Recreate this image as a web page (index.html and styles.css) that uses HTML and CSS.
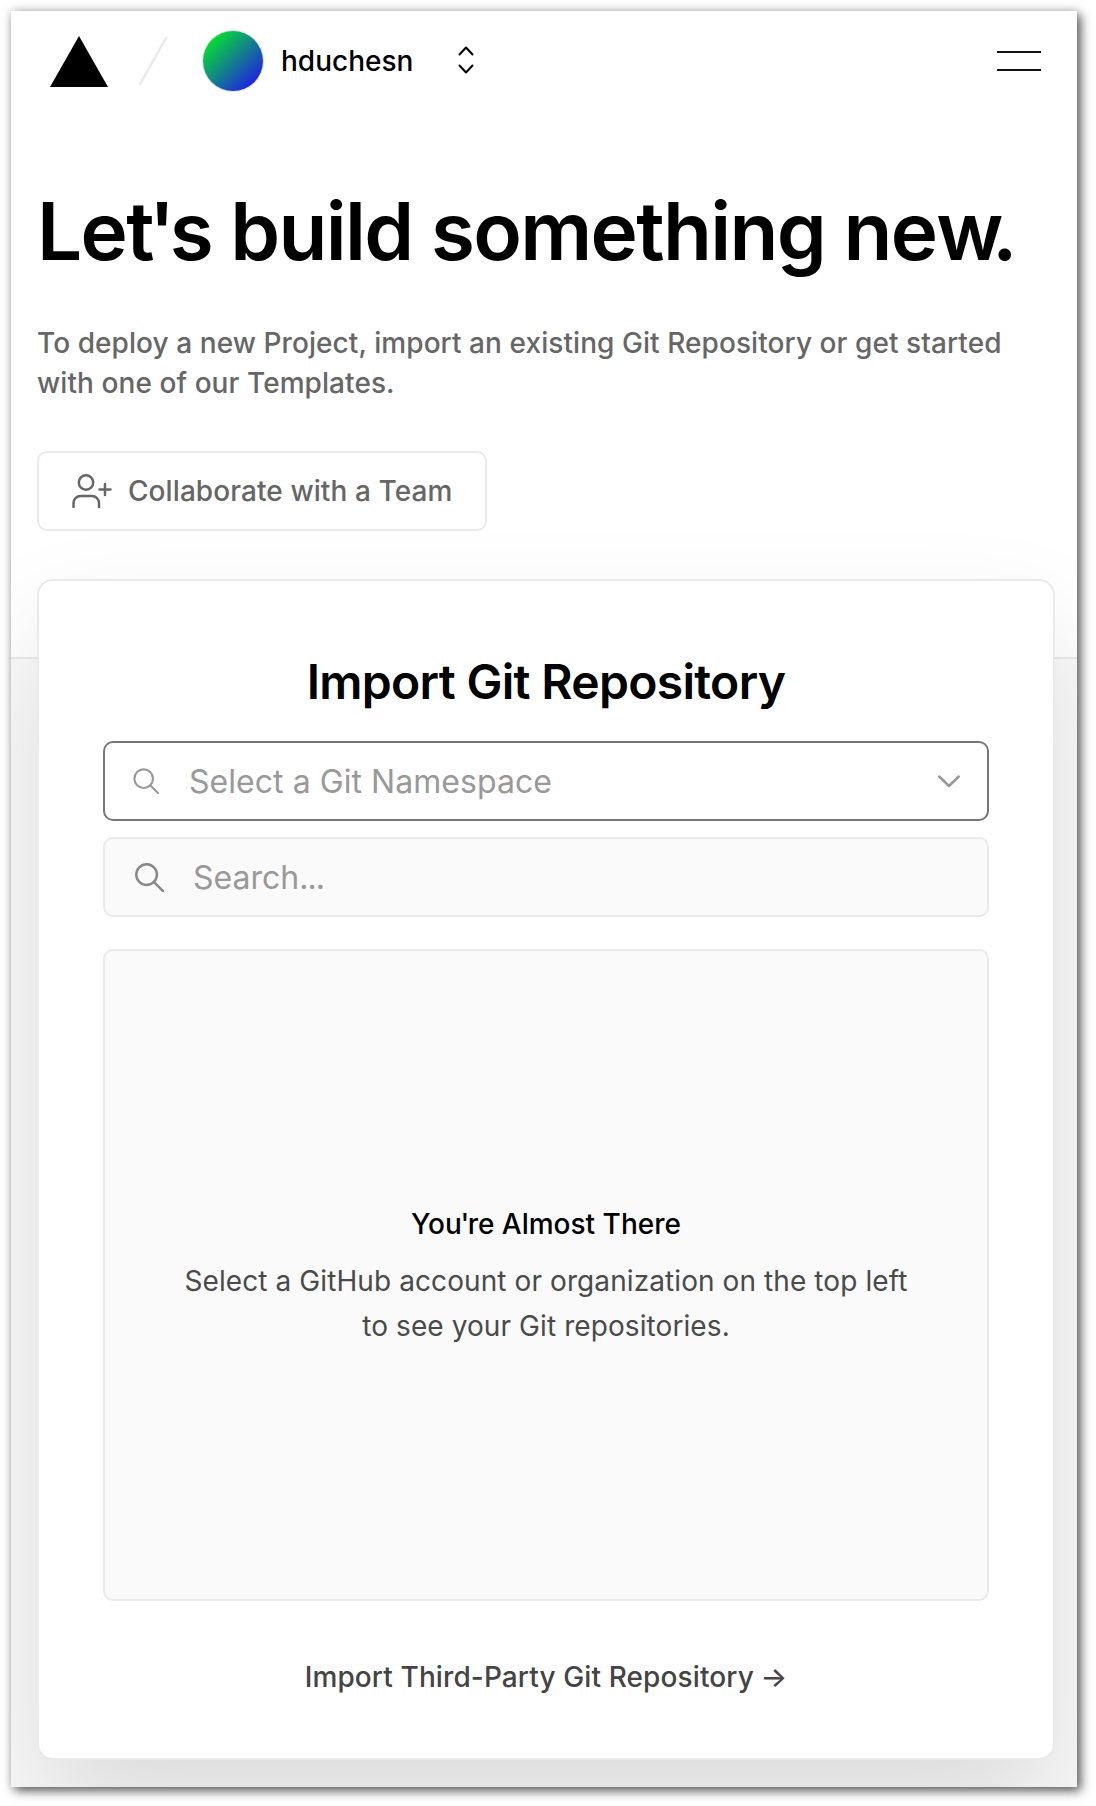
FILE: index.html
```html
<!DOCTYPE html>
<html lang="en">
<head>
<meta charset="utf-8">
<title>New Project</title>
<link rel="stylesheet" href="styles.css">
</head>
<body>
<div class="window">
  <section class="hero">
    <header class="topbar">
      <svg class="logo" viewBox="0 0 58 51" width="58" height="51"><path d="M29 0L58 51H0Z"/></svg>
      <svg class="slash" viewBox="0 0 30 50" width="30" height="50"><path d="M28 2L2 48"/></svg>
      <span class="avatar"></span>
      <span class="name">hduchesn</span>
      <svg class="switcher" viewBox="0 0 16 28" width="16" height="28"><path d="M1.5 8.5L8 1.5L14.5 8.5M1.5 19.5L8 26.5L14.5 19.5"/></svg>
      <button class="menu" aria-label="Menu"><span></span><span></span></button>
    </header>
    <div class="intro">
      <h1>Le<span class="kern">t'</span>s build something ne<span class="kern-dot">w</span>.</h1>
      <p class="lead">To deploy a new Project, import an existing Git Repository or get started with one of our Templates.</p>
      <button class="collaborate">
        <svg viewBox="0 0 40 34" width="40" height="34"><circle cx="14" cy="8.5" r="7.2"/><path d="M1.5 33V29a7 7 0 0 1 7-7H20a7 7 0 0 1 7 7V33M27.5 15.5H38.5M33 10V21"/></svg>
        <span>Collaborate with a Team</span>
      </button>
    </div>
  </section>
  <main class="content">
    <section class="card">
      <h2>Import Git Repository</h2>
      <div class="field select">
        <svg class="find small" viewBox="0 0 28 28" width="26" height="26"><circle cx="11.5" cy="11.5" r="10"/><path d="M19 19L27 27"/></svg>
        <span class="placeholder">Select a Git Namespace</span>
        <svg class="caret" viewBox="0 0 22 13" width="22" height="13"><path d="M1.3 1.5L11 11L20.7 1.5"/></svg>
      </div>
      <div class="field search">
        <svg class="find" viewBox="0 0 30 30" width="29" height="29"><circle cx="12" cy="12" r="10.7"/><path d="M20 20L29 29"/></svg>
        <span class="placeholder">Search<span class="dots">...</span></span>
      </div>
      <div class="empty">
        <h3>Yo<span class="kern">u'</span>re Almost There</h3>
        <p>Select a GitHub account or organization on the top left to see your Git repositories.</p>
      </div>
      <a class="third-party">Import Third-Party Git Repository <span class="arrow">→</span></a>
    </section>
  </main>
</div>
</body>
</html>
```
FILE: styles.css
```css
* { box-sizing: border-box; }
body {
  margin: 0;
  padding: 11px 19px 19px 11px;
  background: #fff;
  font-family: Inter, "Liberation Sans", sans-serif;
  font-size: 28px;
}
h1, h2, h3, p { margin: 0; }
button { font: inherit; background: none; border: 0; padding: 0; }
svg { fill: none; flex: none; stroke-width: 2.5; stroke-linecap: round; stroke-linejoin: round; }

.window {
  width: 1066px;
  height: 1776px;
  background: #fff;
  box-shadow: 4px 4px 10px rgba(0, 0, 0, .6), 0 0 10px rgba(0, 0, 0, .18);
  display: flex;
  flex-direction: column;
}
.hero { height: 648px; border-bottom: 2px solid #eaeaea; }

.topbar { height: 100px; padding: 0 36px 0 39px; display: flex; align-items: center; }
.logo { fill: #000; }
.slash { margin-left: 30px; stroke: #eaeaea; }
.avatar {
  width: 60px;
  height: 60px;
  margin-left: 35px;
  border-radius: 50%;
  background: linear-gradient(135deg, #00f31c 5%, #118f80 45%, #1f15f0 92%);
  box-shadow: 0 0 0 1px rgba(0, 0, 0, .12);
}
.name { margin-left: 18px; font-weight: 500; color: #000; }
.switcher { margin: 0 0 2px 45px; stroke: #000; stroke-width: 2; }
.menu { margin-left: auto; width: 44px; height: 20px; display: flex; flex-direction: column; justify-content: space-between; }
.menu span { width: 44px; height: 2px; background: #111; }

.intro { padding: 72px 26px 0; }
h1 { font-size: 80px; line-height: 96px; font-weight: 600; letter-spacing: -1.7px; white-space: nowrap; }
h1 .kern { letter-spacing: -5.4px; }
h1 .kern-dot { letter-spacing: -11.5px; }
.lead { margin-top: 44px; line-height: 40px; font-weight: 500; color: #666; letter-spacing: .07px; }
.collaborate {
  width: 450px;
  height: 80px;
  margin-top: 48px;
  padding-left: 33px;
  border: 2px solid #eaeaea;
  border-radius: 10px;
  background: #fff;
  display: flex;
  align-items: center;
  gap: 16px;
  font-weight: 500;
  letter-spacing: .08px;
  color: #666;
}
.collaborate svg { stroke: #666; }

.content { flex: 1; background: #fafafa; padding: 0 22px 0 26px; clip-path: inset(-300px 0 0 0); }
.card {
  height: 1181px;
  margin-top: -80px;
  padding: 71px 64px 0;
  border: 2px solid #eaeaea;
  border-radius: 16px;
  background: #fff;
  box-shadow: 0 60px 120px rgba(0, 0, 0, .12);
  display: flex;
  flex-direction: column;
  position: relative;
}
h2 { font-size: 48px; line-height: 60px; font-weight: 600; letter-spacing: -.69px; text-align: center; }
.field {
  height: 80px;
  border: 2px solid #eaeaea;
  border-radius: 10px;
  display: flex;
  align-items: center;
  font-size: 32px;
  color: #999;
}
.select { margin-top: 29px; padding: 0 27px 0 28px; border-color: #777; letter-spacing: .05px; }
.search { margin-top: 16px; padding: 0 30px; background: #fafafa; }
.find { stroke: #888; }
.find.small { stroke: #999; stroke-width: 2.3; }
.placeholder { margin-left: 30px; }
.search .placeholder { margin-left: 29px; }
.dots { letter-spacing: -1px; }
.caret { margin-left: auto; stroke: #999; }
.empty {
  height: 652px;
  margin-top: 32px;
  padding: 2px 70px 0;
  border: 2px solid #eaeaea;
  border-radius: 10px;
  background: #fafafa;
  display: flex;
  flex-direction: column;
  align-items: center;
  justify-content: center;
  gap: 14px;
  text-align: center;
}
.empty h3 { font-size: 28px; line-height: 42px; font-weight: 500; }
.empty .kern { letter-spacing: -1.5px; }
.empty p { line-height: 45px; letter-spacing: .09px; color: #4a4a4a; }
.third-party { margin-top: 55px; line-height: 42px; font-weight: 500; letter-spacing: .11px; color: #444; text-align: center; }
.arrow { margin-left: -1px; }
```
